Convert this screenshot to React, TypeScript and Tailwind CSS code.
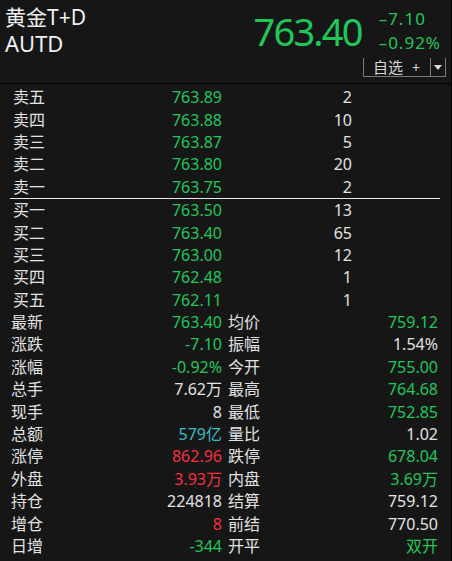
import React from "react";

const G = "text-[#1fc75b]";
const W = "text-[#e2e2e2]";
const R = "text-[#f5313f]";
const C = "text-[#38bccb]";

const sells: [string, string, string][] = [
  ["卖五", "763.89", "2"],
  ["卖四", "763.88", "10"],
  ["卖三", "763.87", "5"],
  ["卖二", "763.80", "20"],
  ["卖一", "763.75", "2"],
];
const buys: [string, string, string][] = [
  ["买一", "763.50", "13"],
  ["买二", "763.40", "65"],
  ["买三", "763.00", "12"],
  ["买四", "762.48", "1"],
  ["买五", "762.11", "1"],
];

const stats: [string, string, string, string, string, string][] = [
  ["最新", "763.40", G, "均价", "759.12", G],
  ["涨跌", "-7.10", G, "振幅", "1.54%", W],
  ["涨幅", "-0.92%", G, "今开", "755.00", G],
  ["总手", "7.62万", W, "最高", "764.68", G],
  ["现手", "8", W, "最低", "752.85", G],
  ["总额", "579亿", C, "量比", "1.02", W],
  ["涨停", "862.96", R, "跌停", "678.04", G],
  ["外盘", "3.93万", R, "内盘", "3.69万", G],
  ["持仓", "224818", W, "结算", "759.12", W],
  ["增仓", "8", R, "前结", "770.50", W],
  ["日增", "-344", G, "开平", "双开", G],
];

function BookRow({ l, p, v }: { l: string; p: string; v: string }) {
  return (
    <div className="flex items-center h-[22.4px] text-[16px] leading-none">
      <div className={`w-[160px] pl-[13px] ${W}`}>{l}</div>
      <div className={`w-[62px] text-right ${G}`}>{p}</div>
      <div className={`w-[130px] text-right ${W}`}>{v}</div>
    </div>
  );
}

export default function App() {
  return (
    <div className="w-[452px] h-[561px] bg-[#161616] border-r border-black overflow-hidden font-['Noto_Sans','Noto_Sans_CJK_SC',sans-serif]">
      {/* header */}
      <div className="h-[83px] flex justify-between">
        <div className="flex flex-col pl-[5px] pt-[4px] text-[#f0f0f0]">
          <div className="text-[21px] leading-[26px]">黄金T+D</div>
          <div className="text-[22px] leading-[26px]">AUTD</div>
        </div>
        <div className="flex flex-col items-end pt-[7px] pr-[5px]">
          <div className="flex items-center mr-[5px]">
            <div className={`text-[38px] leading-[44px] tracking-[-1.8px] ${G}`}>763.40</div>
            <div className={`ml-[17px] flex flex-col text-[17px] leading-[24px] tracking-[1px] ${G}`}>
              <div>–7.10</div>
              <div>–0.92%</div>
            </div>
          </div>
          <div className="mt-[3px] h-[19px] flex border-l border-b border-r border-[#7a7a7a]">
            <div className="w-[67px] flex items-end pl-[9px] text-[15px] leading-[17px] text-[#d6d6d6] border-r border-[#7a7a7a]">
              <span>自选</span>
              <span className="ml-[9px] text-[14px]">+</span>
            </div>
            <div className="w-[14px] flex items-center justify-center">
              <svg width="8" height="5" viewBox="0 0 8 5">
                <path d="M0 0 H8 L4 5 Z" fill="#dcdcdc" />
              </svg>
            </div>
          </div>
        </div>
      </div>
      <div className="h-px bg-black" />
      {/* order book */}
      <div className="mt-[2px]">
        {sells.map(([l, p, v]) => (
          <BookRow key={l} l={l} p={p} v={v} />
        ))}
      </div>
      <div className="ml-[10px] w-[430px] h-px bg-[#e8e8e8]" />
      <div>
        {buys.map(([l, p, v]) => (
          <BookRow key={l} l={l} p={p} v={v} />
        ))}
      </div>
      {/* stats */}
      <div>
        {stats.map(([l1, v1, c1, l2, v2, c2]) => (
          <div key={l1} className="flex items-center h-[22.4px] text-[16px] leading-none pr-[13px]">
            <div className={`w-[160px] pl-[11px] ${W}`}>{l1}</div>
            <div className={`w-[62px] text-right whitespace-nowrap ${c1}`}>{v1}</div>
            <div className={`pl-[6px] ${W}`}>{l2}</div>
            <div className={`flex-1 text-right ${c2}`}>{v2}</div>
          </div>
        ))}
      </div>
    </div>
  );
}
